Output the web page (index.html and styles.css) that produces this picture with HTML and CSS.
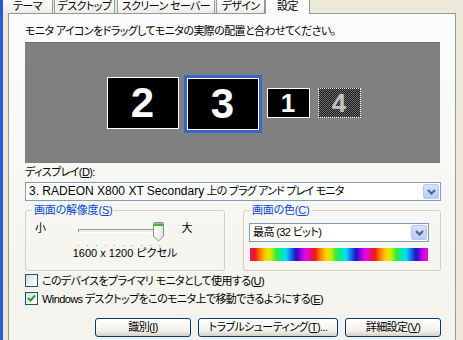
FILE: index.html
```html
<!DOCTYPE html>
<html lang="ja">
<head>
    <meta charset="UTF-8">
    <title>画面のプロパティ - 設定</title>
    <link rel="stylesheet" href="styles.css">
</head>
<body>
    <div class="frame">
        <div class="tabs">
            <div class="tab t1">テーマ</div>
            <div class="tab t2">デスクトップ</div>
            <div class="tab t3">スクリーン セーバー</div>
            <div class="tab t4">デザイン</div>
            <div class="tab t5 active">設定</div>
        </div>

        <div class="panel">
            <p class="hint">モニタ アイコンをドラッグしてモニタの実際の配置と合わせてください。</p>

            <div class="layout">
                <div class="mon big">2</div>
                <div class="sel">
                    <div class="mon big">3</div>
                </div>
                <div class="mon small">1</div>
                <div class="mon small off">4</div>
            </div>

            <div class="label">ディスプレイ(<u>D</u>):</div>
            <div class="select wide">
                <span class="value"><span class="en">3. RADEON X800 XT Secondary</span> 上の プラグ アンド プレイ モニタ</span>
                <span class="drop">
                    <svg width="9" height="6" viewBox="0 0 9 6"><path d="M1 1 L4.5 4.5 L8 1" fill="none" stroke="#4d6185" stroke-width="2"/></svg>
                </span>
            </div>

            <div class="groups">
                <fieldset class="group res">
                    <legend>画面の解像度(<u>S</u>)</legend>
                    <div class="slider-row">
                        <span class="small-label">小</span>
                        <div class="slider">
                            <div class="track"></div>
                            <div class="ticks"></div>
                            <svg class="thumb" width="11" height="20" viewBox="0 0 11 20">
                                <defs>
                                    <linearGradient id="tb" x1="0" y1="0" x2="1" y2="0">
                                        <stop offset="0" stop-color="#ffffff"/>
                                        <stop offset="1" stop-color="#e6e6e0"/>
                                    </linearGradient>
                                </defs>
                                <path d="M0.5 2 Q0.5 0.5 2 0.5 H9 Q10.5 0.5 10.5 2 V14 L5.5 19 L0.5 14 Z" fill="url(#tb)" stroke="#8b8b83"/>
                                <rect x="1" y="1" width="9" height="3" fill="#3cb43c"/>
                                <rect x="1" y="1" width="9" height="1" fill="#7ad67a"/>
                            </svg>
                        </div>
                        <span class="big-label">大</span>
                    </div>
                    <div class="res-text">1600 x 1200 ピクセル</div>
                </fieldset>

                <fieldset class="group color">
                    <legend>画面の色(<u>C</u>)</legend>
                    <div class="select narrow">
                        <span class="value">最高 (32 ビット)</span>
                        <span class="drop">
                            <svg width="9" height="6" viewBox="0 0 9 6"><path d="M1 1 L4.5 4.5 L8 1" fill="none" stroke="#4d6185" stroke-width="2"/></svg>
                        </span>
                    </div>
                    <div class="colorbar"></div>
                </fieldset>
            </div>

            <div class="check">
                <span class="box"></span>
                <span>このデバイスをプライマリ モニタとして使用する(<u>U</u>)</span>
            </div>
            <div class="check">
                <span class="box">
                    <svg width="11" height="11" viewBox="0 0 11 11"><path d="M2 5 L4.5 7.5 L9 2.5" fill="none" stroke="#21a121" stroke-width="2"/></svg>
                </span>
                <span>Windows デスクトップをこのモニタ上で移動できるようにする(<u>E</u>)</span>
            </div>

            <div class="buttons">
                <button class="btn b1">識別(<u>I</u>)</button>
                <button class="btn b2">トラブルシューティング(<u>T</u>)...</button>
                <button class="btn b3">詳細設定(<u>V</u>)</button>
            </div>
        </div>
    </div>
</body>
</html>
```

FILE: styles.css
```css
* {
    margin: 0;
    padding: 0;
    box-sizing: border-box;
}
body {
    width: 463px;
    height: 340px;
    overflow: hidden;
    background: #ece9d8;
    font-family: "Liberation Sans", "Noto Sans CJK JP", sans-serif;
    font-size: 11px;
    letter-spacing: -0.6px;
    font-feature-settings: "palt";
    color: #000;
}
u {
    text-decoration: underline;
    text-underline-offset: 1px;
}
.en {
    font-family: "Liberation Sans", sans-serif;
    font-size: 12px;
    letter-spacing: 0;
}
.frame {
    height: 340px;
    border-left: 3px solid #2a5bd6;
}

/* tabs */
.tabs {
    display: flex;
    height: 14px;
    margin-bottom: -1px;
    position: relative;
    z-index: 1;
}
.tab {
    height: 13px;
    line-height: 12px;
    text-align: center;
    white-space: nowrap;
    background: linear-gradient(#ffffff, #ecebe6);
    border-right: 1px solid #919b9c;
    border-left: 1px solid #919b9c;
}
.t1 { width: 50px; border-left: none; }
.t2 { width: 61px; margin-left: 1px; }
.t3 { width: 98px; margin-left: 2px; }
.t4 { width: 49px; margin-left: 1px; }
.t5 { width: 45px; }
.tab.active {
    height: 14px;
    background: #fcfcfe;
}

/* panel */
.panel {
    margin-left: 5px;
    width: 448px;
    height: 340px;
    border: 1px solid #919b9c;
    background: linear-gradient(#fcfcfe 0%, #f7f6f2 60%, #f3f2ec 100%);
    padding: 0 14px 0 16px;
}
.hint {
    margin-top: 11px;
    line-height: 13px;
    white-space: nowrap;
}

.layout {
    margin-top: 4px;
    margin-right: 1px;
    height: 121px;
    background: #808080;
    border-top: 1px solid #727272;
    display: flex;
    align-items: center;
    justify-content: center;
    padding-left: 2px;
}
.mon {
    background: #000;
    border: 1px solid #fff;
    color: #fff;
    font-family: "Liberation Sans", sans-serif;
    font-weight: bold;
    letter-spacing: 0;
    display: flex;
    align-items: center;
    justify-content: center;
}
.mon.big {
    width: 72px;
    height: 52px;
    font-size: 42px;
}
.mon.small {
    width: 43px;
    height: 30px;
    font-size: 26px;
}
.sel {
    border: 3px solid #316ac5;
    margin: 1px 5px 0;
}
.mon.off {
    margin-left: 8px;
    border: 1px dotted #fff;
    background: repeating-conic-gradient(#1a1a1a 0 25%, #6e6e6e 0 50%) 0 0 / 2px 2px;
    color: #c4c4c4;
}

.label {
    margin-top: 3px;
    line-height: 13px;
}

/* combo boxes */
.select {
    display: flex;
    align-items: center;
    justify-content: space-between;
    height: 19px;
    background: #fff;
    border: 1px solid #7f9db9;
    padding: 1px 1px 1px 3px;
}
.select.wide {
    margin-top: 3px;
}
.select.wide .value {
    letter-spacing: -0.8px;
}
.select .value {
    white-space: nowrap;
    line-height: 15px;
}
.drop {
    width: 16px;
    height: 15px;
    border: 1px solid #b4c7f3;
    border-radius: 2px;
    background: linear-gradient(#d6e0fb, #b9cbf7);
    display: flex;
    align-items: center;
    justify-content: center;
}

/* group boxes */
.groups {
    display: flex;
    gap: 18px;
    margin-top: 3px;
}
.group {
    border: 1px solid #d0d0bf;
    border-radius: 3px;
    height: 67px;
}
.group legend {
    color: #0046d5;
    line-height: 13px;
    padding: 0 2px;
    margin-left: 6px;
    white-space: nowrap;
    letter-spacing: -0.2px;
}
.group.res {
    width: 200px;
}
.group.color {
    width: 198px;
}

.slider-row {
    display: flex;
    align-items: flex-start;
    margin-top: 5px;
    height: 22px;
}
.small-label {
    margin-left: 9px;
    line-height: 13px;
}
.big-label {
    margin-left: 14px;
    line-height: 13px;
}
.slider {
    position: relative;
    width: 89px;
    height: 24px;
    margin-left: 33px;
}
.track {
    margin-top: 7px;
    width: 84px;
    height: 4px;
    border-top: 1px solid #9d9c99;
    border-left: 1px solid #9d9c99;
    border-bottom: 1px solid #fff;
    border-right: 1px solid #fff;
    background: #ecebe6;
}
.ticks {
    margin-top: 12px;
    width: 82px;
    height: 1px;
    background: repeating-linear-gradient(90deg, #a0a0a0 0 1px, transparent 1px 9px);
}
.thumb {
    position: absolute;
    left: 75px;
    top: 0;
}
.res-text {
    margin-top: 3px;
    text-align: center;
    line-height: 13px;
    letter-spacing: 0;
}

.select.narrow {
    margin: 6px 0 0 5px;
    width: 180px;
}
.colorbar {
    margin: 6px 0 0 6px;
    width: 178px;
    height: 13px;
    background: repeating-linear-gradient(90deg,
        #e0147f 0, #f01818 5px, #ff7a00 10px, #ffd400 16px, #c8f000 21px,
        #3ce83c 26px, #00eaa0 31px, #00e0f0 36px, #1a6cf0 41px, #1a14c0 46px,
        #a000e0 51px, #f000f0 56px, #e0147f 60px);
}

/* checkboxes */
.check {
    display: flex;
    align-items: center;
    height: 18px;
    gap: 4px;
    white-space: nowrap;
}
.check:first-of-type {
    margin-top: 2px;
}
.box {
    width: 13px;
    height: 13px;
    border: 1px solid #1c5180;
    background: linear-gradient(135deg, #dcdcd7, #ffffff);
    display: flex;
    align-items: center;
    justify-content: center;
}

/* buttons */
.buttons {
    display: flex;
    justify-content: flex-end;
    gap: 7px;
    margin-top: 11px;
}
.btn {
    height: 19px;
    border: 1px solid #003c74;
    border-radius: 3px;
    background: linear-gradient(#ffffff, #f0f0ea 70%, #d6d0c5);
    font: inherit;
    letter-spacing: inherit;
    font-feature-settings: "palt";
    color: #000;
    line-height: 15px;
    white-space: nowrap;
}
.b1 { width: 96px; }
.b2 { width: 140px; }
.b3 { width: 96px; }
```
